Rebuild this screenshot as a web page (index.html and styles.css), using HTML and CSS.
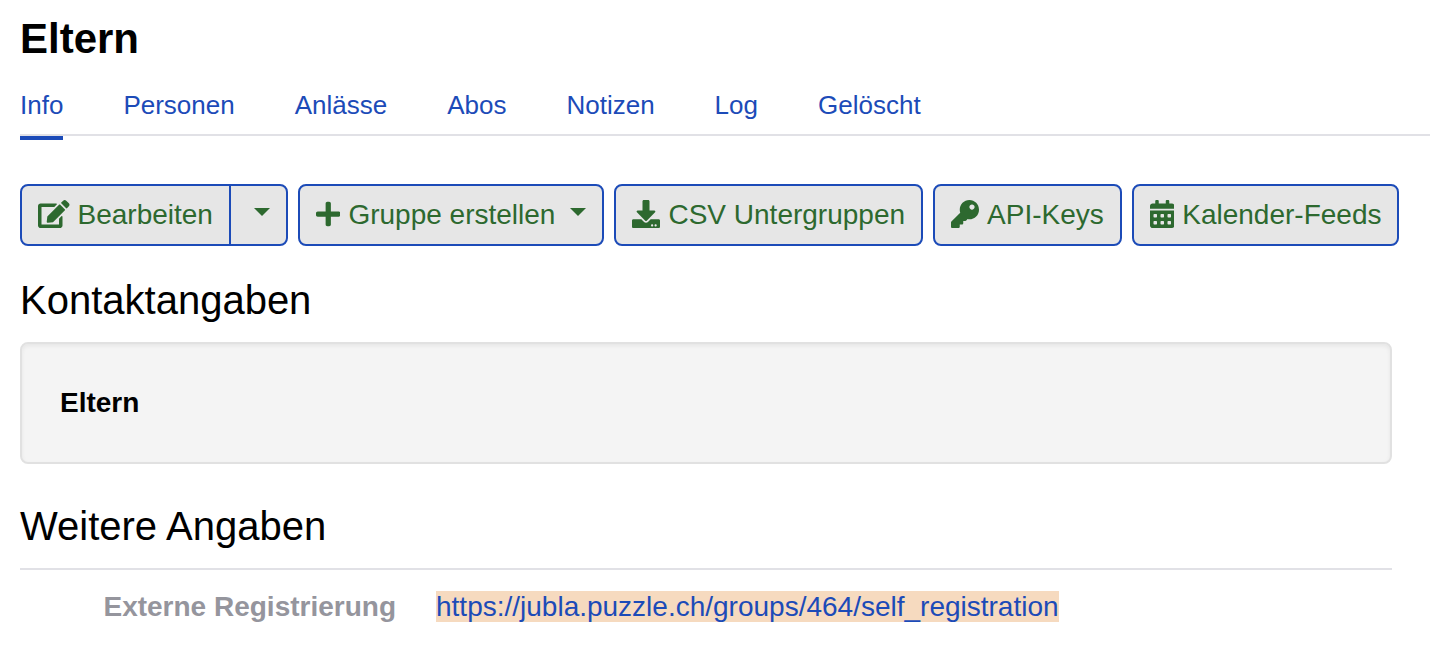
FILE: index.html
```html
<!DOCTYPE html>
<html lang="de">
<head>
<meta charset="utf-8">
<meta name="viewport" content="width=device-width, initial-scale=1">
<title>Eltern</title>
<link rel="stylesheet" href="styles.css">
</head>
<body>
<main class="page">
  <h1 class="page-title">Eltern</h1>

  <nav class="tabs" aria-label="Gruppe">
    <a class="tab tab-active" href="#info" aria-current="page">Info</a>
    <a class="tab" href="#personen">Personen</a>
    <a class="tab" href="#anlaesse">Anlässe</a>
    <a class="tab" href="#abos">Abos</a>
    <a class="tab" href="#notizen">Notizen</a>
    <a class="tab" href="#log">Log</a>
    <a class="tab" href="#geloescht">Gelöscht</a>
  </nav>

  <div class="toolbar">
    <div class="btn-group">
      <button class="btn" type="button"><svg class="icon" viewBox="0 0 576 512" aria-hidden="true"><path d="M402.6 83.2l90.2 90.2c3.8 3.8 3.8 10 0 13.8L274.4 405.6l-92.8 10.3c-12.4 1.4-22.9-9.1-21.5-21.5l10.3-92.8L388.8 83.2c3.8-3.8 10-3.8 13.8 0zm162-22.9l-48.8-48.8c-15.2-15.2-39.9-15.2-55.2 0l-35.4 35.4c-3.8 3.8-3.8 10 0 13.8l90.2 90.2c3.8 3.8 10 3.8 13.8 0l35.4-35.4c15.2-15.3 15.2-40 0-55.2zM384 346.2V448H64V128h229.8c3.2 0 6.2-1.3 8.5-3.5l40-40c7.6-7.6 2.2-20.5-8.5-20.5H48C21.5 64 0 85.5 0 112v352c0 26.5 21.5 48 48 48h352c26.5 0 48-21.5 48-48V306.2c0-10.7-12.9-16-20.5-8.5l-40 40c-2.2 2.3-3.5 5.3-3.5 8.5z"/></svg>Bearbeiten</button>
      <button class="btn" type="button" aria-label="Weitere Aktionen"><span class="caret"></span></button>
    </div>
    <button class="btn" type="button"><svg class="icon" viewBox="0 0 448 512" aria-hidden="true"><path d="M416 208H272V64c0-17.67-14.33-32-32-32h-32c-17.67 0-32 14.33-32 32v144H32c-17.67 0-32 14.33-32 32v32c0 17.67 14.33 32 32 32h144v144c0 17.67 14.33 32 32 32h32c17.67 0 32-14.33 32-32V304h144c17.67 0 32-14.33 32-32v-32c0-17.67-14.33-32-32-32z"/></svg>Gruppe erstellen<span class="caret"></span></button>
    <button class="btn" type="button"><svg class="icon" viewBox="0 0 512 512" aria-hidden="true"><path d="M216 0h80c13.3 0 24 10.7 24 24v168h87.7c17.8 0 26.7 21.5 14.1 34.1L269.7 378.3c-7.5 7.5-19.8 7.5-27.3 0L90.1 226.1c-12.6-12.6-3.7-34.1 14.1-34.1H192V24c0-13.3 10.7-24 24-24zm296 376v112c0 13.3-10.7 24-24 24H24c-13.3 0-24-10.7-24-24V376c0-13.3 10.7-24 24-24h146.7l49 49c20.1 20.1 52.5 20.1 72.6 0l49-49H488c13.3 0 24 10.7 24 24zm-124 88c0-11-9-20-20-20s-20 9-20 20 9 20 20 20 20-9 20-20zm64 0c0-11-9-20-20-20s-20 9-20 20 9 20 20 20 20-9 20-20z"/></svg>CSV Untergruppen</button>
    <button class="btn" type="button"><svg class="icon" viewBox="0 0 512 512" aria-hidden="true"><path d="M512 176.001C512 273.203 433.202 352 336 352c-11.22 0-22.19-1.062-32.827-3.069l-24.012 27.014A23.999 23.999 0 0 1 261.223 384H224v40c0 13.255-10.745 24-24 24h-40v40c0 13.255-10.745 24-24 24H24c-13.255 0-24-10.745-24-24v-78.059c0-6.365 2.529-12.47 7.029-16.971l161.802-161.802C163.108 213.814 160 195.271 160 176 160 78.798 238.797.001 335.999 0 433.488-.001 512 78.511 512 176.001zM336 128c0 26.51 21.49 48 48 48s48-21.49 48-48-21.49-48-48-48-48 21.49-48 48z"/></svg>API-Keys</button>
    <button class="btn" type="button"><svg class="icon" viewBox="0 0 448 512" aria-hidden="true"><path fill-rule="evenodd" d="M0 464c0 26.5 21.5 48 48 48h352c26.5 0 48-21.5 48-48V192H0v272zM76 256h40c6.600 0 12 5.400 12 12v40c0 6.600-5.400 12-12 12H76c-6.600 0-12-5.400-12-12v-40c0-6.600 5.400-12 12-12zM204 256h40c6.600 0 12 5.400 12 12v40c0 6.600-5.400 12-12 12h-40c-6.600 0-12-5.400-12-12v-40c0-6.600 5.400-12 12-12zM332 256h40c6.600 0 12 5.400 12 12v40c0 6.600-5.400 12-12 12h-40c-6.600 0-12-5.400-12-12v-40c0-6.600 5.400-12 12-12zM76 384h40c6.600 0 12 5.400 12 12v40c0 6.600-5.400 12-12 12H76c-6.600 0-12-5.400-12-12v-40c0-6.600 5.400-12 12-12zM204 384h40c6.600 0 12 5.400 12 12v40c0 6.600-5.400 12-12 12h-40c-6.600 0-12-5.400-12-12v-40c0-6.600 5.400-12 12-12zM332 384h40c6.600 0 12 5.400 12 12v40c0 6.600-5.400 12-12 12h-40c-6.600 0-12-5.400-12-12v-40c0-6.600 5.400-12 12-12zM400 64h-48V16c0-8.800-7.200-16-16-16h-32c-8.800 0-16 7.200-16 16v48H160V16c0-8.800-7.200-16-16-16h-32c-8.800 0-16 7.200-16 16v48H48C21.500 64 0 85.500 0 112v48h448v-48c0-26.500-21.500-48-48-48z"/></svg>Kalender-Feeds</button>
  </div>

  <section class="section">
    <h2 class="section-title">Kontaktangaben</h2>
    <div class="well"><strong>Eltern</strong></div>
  </section>

  <section class="section">
    <h2 class="section-title">Weitere Angaben</h2>
    <dl class="details">
      <dt class="details-label">Externe Registrierung</dt>
      <dd class="details-value"><a class="link" href="https://jubla.puzzle.ch/groups/464/self_registration">https://jubla.puzzle.ch/groups/464/self_registration</a></dd>
    </dl>
  </section>
</main>
</body>
</html>
```
FILE: styles.css
```css
* {
  box-sizing: border-box;
}

body {
  margin: 0;
  background: #fff;
  color: #000;
  font: 28px/42px "Liberation Sans", Helvetica, Arial, sans-serif;
}

.page {
  padding: 14px 0 16px 20px;
}

.page-title {
  margin: 0;
  font-size: 42px;
  line-height: 50px;
  font-weight: 700;
}

.tabs {
  display: flex;
  gap: 60px;
  height: 72px;
  padding-top: 22px;
  border-bottom: 2px solid #e1e1e6;
  font-size: 26px;
  line-height: 38px;
}

.tab {
  flex: none;
  height: 54px;
  color: #1c4bb8;
  text-decoration: none;
}

.tab-active {
  border-bottom: 4px solid #1c4bb8;
}

.toolbar {
  display: flex;
  flex-wrap: wrap;
  gap: 10px;
  margin-top: 48px;
}

.btn-group {
  display: flex;
}

.btn {
  display: flex;
  align-items: center;
  gap: 8px;
  padding: 8px 16px;
  border: 2px solid #1c4bb8;
  border-radius: 8px;
  background: #e6e6e6;
  color: #2d692f;
  font: inherit;
  white-space: nowrap;
}

.btn-group .btn:first-child {
  border-top-right-radius: 0;
  border-bottom-right-radius: 0;
}

.btn-group .btn:last-child {
  margin-left: -2px;
  border-top-left-radius: 0;
  border-bottom-left-radius: 0;
}

.icon {
  flex: none;
  height: 28px;
  margin-bottom: 3px;
  fill: currentColor;
}

.caret {
  margin: 0 0 6px 7px;
  border: 8px solid transparent;
  border-top-color: currentColor;
  border-bottom: 0;
}

.section {
  margin: 30px 38px 0 0;
}

.section-title {
  margin: 0;
  font-size: 40px;
  line-height: 48px;
  font-weight: 400;
}

.well {
  margin: 18px 0 38px;
  padding: 38px;
  border: 2px solid #e1e1e1;
  border-radius: 8px;
  background: #f4f4f4;
  box-shadow: inset 0 2px 4px rgba(0, 0, 0, 0.06);
}

.details {
  display: grid;
  grid-template-columns: 376px 1fr;
  column-gap: 40px;
  margin: 18px 0 0;
  padding-top: 16px;
  border-top: 2px solid #e1e1e6;
}

.details-label {
  color: #95959d;
  font-weight: 700;
  text-align: right;
}

.details-value {
  margin: 0;
}

.link {
  background: #f6dabf;
  color: #1c4bb8;
  text-decoration: none;
}
```
